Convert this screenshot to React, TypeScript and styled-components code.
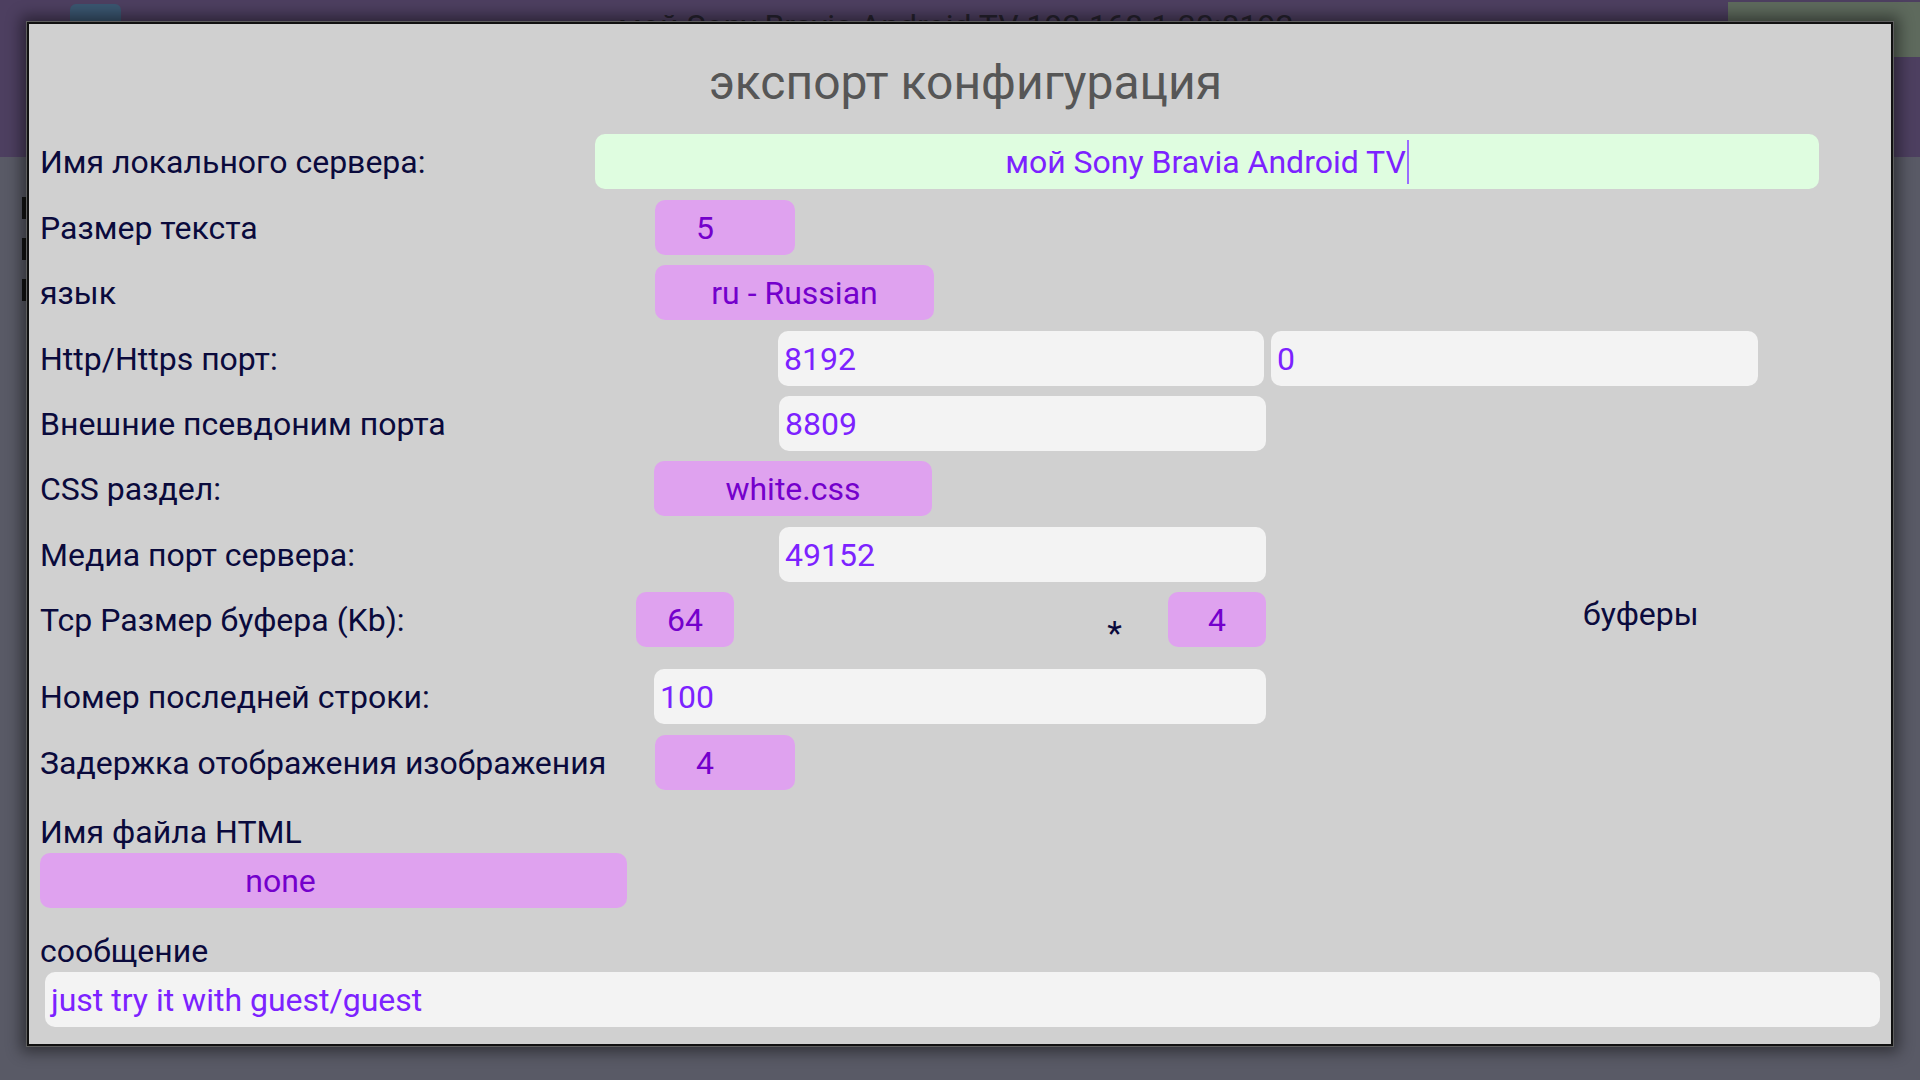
import styled, { createGlobalStyle } from 'styled-components';

const GlobalStyle = createGlobalStyle`
    html, body {
        margin: 0;
        padding: 0;
        background: #595a66;
        overflow: hidden;
    }
    * {
        box-sizing: border-box;
    }
`;

/* the app page that sits dimmed behind the dialog */
const Screen = styled.div`
    position: relative;
    width: 1920px;
    height: 1080px;
    background: #595a66;
    font-family: Roboto, "Noto Sans", sans-serif;
`;

const Header = styled.div`
    display: flex;
    align-items: flex-start;
    height: 157px;
    background: #4d3f60;
`;

const AppIcon = styled.div`
    width: 51px;
    height: 50px;
    margin: 4px 0 0 70px;
    border-radius: 6px;
    background: #3a5670;
`;

const HeaderTitle = styled.div`
    margin: 6px 0 0 497px;
    font-size: 32px;
    line-height: 40px;
    color: #26222e;
    white-space: nowrap;
`;

const HeaderAction = styled.div`
    width: 192px;
    height: 55px;
    margin: 2px 0 0 auto;
    background: #5e6a5d;
`;

const BackList = styled.div`
    display: flex;
    flex-direction: column;
    gap: 19px;
    padding: 40px 0 0 22px;
`;

const BackLine = styled.div`
    width: 4px;
    height: 22px;
    background: #141414;
`;

/* dialog */
const Dialog = styled.div`
    position: absolute;
    left: 27px;
    top: 22px;
    width: 1866px;
    height: 1024px;
    display: flex;
    flex-direction: column;
    padding-left: 11px;
    background: #d0d0d0;
    border: 2px solid #111;
    box-shadow: 0 0 0 1px #5e5e5e, 0 0 14px 6px rgba(0, 0, 0, 0.45);
`;

const Title = styled.h2`
    margin: 0;
    padding-top: 31px;
    height: 86px;
    font-size: 48px;
    line-height: 56px;
    font-weight: 400;
    color: #565656;
    text-align: center;
`;

const Row = styled.div<{ $gap: number }>`
    display: flex;
    align-items: center;
    height: 55px;
    margin-top: ${p => p.$gap}px;
`;

const Label = styled.div<{ $w?: number }>`
    flex: 0 0 auto;
    width: ${p => (p.$w ? `${p.$w}px` : 'auto')};
    font-size: 32px;
    line-height: 40px;
    color: #0a0a3c;
    white-space: nowrap;
`;

const Field = styled.div<{ $w: number; $ml?: number }>`
    display: flex;
    align-items: center;
    flex: 0 0 auto;
    width: ${p => p.$w}px;
    height: 55px;
    margin-left: ${p => p.$ml ?? 0}px;
    padding-left: 6px;
    border-radius: 10px;
    background: #f3f3f3;
    font-size: 32px;
    color: #7c22ff;
    white-space: nowrap;
`;

const NameField = styled(Field)`
    justify-content: center;
    padding-left: 0;
    background: #dffde0;
`;

const Caret = styled.span`
    display: inline-block;
    width: 2px;
    height: 44px;
    margin-left: 1px;
    background: #9a6cff;
`;

const Pick = styled.div<{ $w: number; $pr?: number }>`
    display: flex;
    align-items: center;
    justify-content: center;
    flex: 0 0 auto;
    width: ${p => p.$w}px;
    height: 55px;
    padding-right: ${p => p.$pr ?? 0}px;
    border-radius: 10px;
    background: #dfa2ef;
    font-size: 32px;
    color: #7400cc;
    white-space: nowrap;
`;

const Times = styled.div`
    align-self: flex-start;
    width: 434px;
    margin-top: 21px;
    padding-right: 46px;
    text-align: right;
    font-size: 34px;
    line-height: 40px;
    color: #0a0a3c;
`;

const Buffers = styled.div`
    align-self: flex-start;
    margin: 2px 0 0 317px;
    font-size: 32px;
    line-height: 40px;
    color: #0a0a3c;
`;

const Block = styled.div<{ $gap: number }>`
    display: flex;
    flex-direction: column;
    align-items: flex-start;
    gap: 1px;
    margin-top: ${p => p.$gap}px;
`;

export default function App() {
    return (
        <Screen>
            <GlobalStyle />
            <Header>
                <AppIcon />
                <HeaderTitle>мой Sony Bravia Android TV 192.168.1.30:8192</HeaderTitle>
                <HeaderAction />
            </Header>
            <BackList>
                <BackLine />
                <BackLine />
                <BackLine />
            </BackList>

            <Dialog>
                <Title>экспорт конфигурация</Title>

                <Row $gap={24}>
                    <Label $w={555}>Имя локального сервера:</Label>
                    <NameField $w={1224}>
                        мой Sony Bravia Android TV<Caret />
                    </NameField>
                </Row>

                <Row $gap={11}>
                    <Label $w={615}>Размер текста</Label>
                    <Pick $w={140} $pr={40}>5</Pick>
                </Row>

                <Row $gap={10}>
                    <Label $w={615}>язык</Label>
                    <Pick $w={279}>ru - Russian</Pick>
                </Row>

                <Row $gap={11}>
                    <Label $w={738}>Http/Https порт:</Label>
                    <Field $w={486}>8192</Field>
                    <Field $w={487} $ml={7}>0</Field>
                </Row>

                <Row $gap={10}>
                    <Label $w={739}>Внешние псевдоним порта</Label>
                    <Field $w={487}>8809</Field>
                </Row>

                <Row $gap={10}>
                    <Label $w={614}>CSS раздел:</Label>
                    <Pick $w={278}>white.css</Pick>
                </Row>

                <Row $gap={11}>
                    <Label $w={739}>Медиа порт сервера:</Label>
                    <Field $w={487}>49152</Field>
                </Row>

                <Row $gap={10}>
                    <Label $w={596}>Tcp Размер буфера (Kb):</Label>
                    <Pick $w={98}>64</Pick>
                    <Times>*</Times>
                    <Pick $w={98}>4</Pick>
                    <Buffers>буферы</Buffers>
                </Row>

                <Row $gap={22}>
                    <Label $w={614}>Номер последней строки:</Label>
                    <Field $w={612}>100</Field>
                </Row>

                <Row $gap={11}>
                    <Label $w={615}>Задержка отображения изображения</Label>
                    <Pick $w={140} $pr={40}>4</Pick>
                </Row>

                <Block $gap={22}>
                    <Label>Имя файла HTML</Label>
                    <Pick $w={587} $pr={106}>none</Pick>
                </Block>

                <Block $gap={23}>
                    <Label>сообщение</Label>
                    <Field $w={1835} $ml={5}>just try it with guest/guest</Field>
                </Block>
            </Dialog>
        </Screen>
    );
}
